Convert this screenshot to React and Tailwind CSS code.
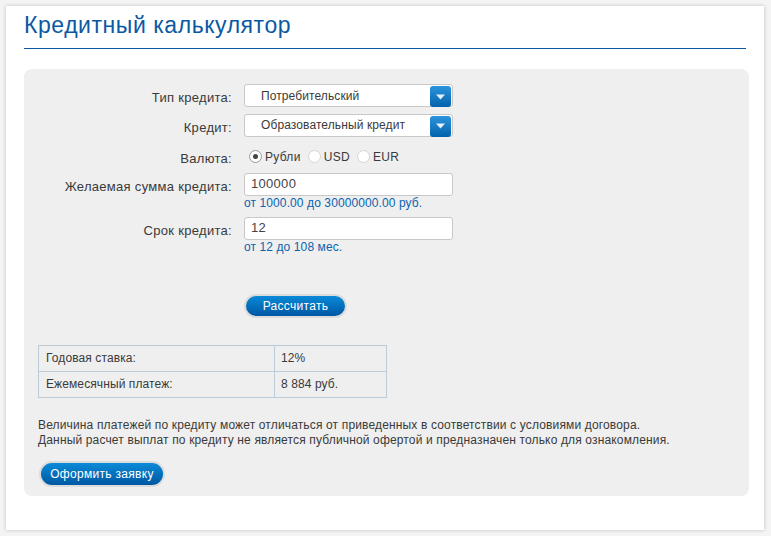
const font = { fontFamily: '"Liberation Sans", Arial, sans-serif' };

function SelectBox({ value }) {
  return (
    <div className="relative flex h-[23px] w-[209px] items-center rounded-[3px] border border-[#c8c8c8] bg-white pl-4 text-[12px] tracking-[0.1px] text-[#3a3a3a]">
      <span>{value}</span>
      <span className="absolute right-[1px] top-[1px] flex h-[21px] w-[21px] items-center justify-center rounded-[3px] bg-gradient-to-b from-[#2b95dd] to-[#0062ab]">
        <svg width="9" height="6" viewBox="0 0 9 6">
          <path d="M0 0.5 L9 0.5 L4.5 5.5 Z" fill="#e6f2fb" />
        </svg>
      </span>
    </div>
  );
}

function Radio({ checked, label }) {
  return (
    <label className="flex items-center gap-[3px] text-[12px] tracking-[0.3px] text-[#3a3a3a]">
      <span className={`flex h-[13px] w-[13px] items-center justify-center rounded-full border bg-white ${checked ? 'border-[#9a9a9a]' : 'border-[#d4d4d4]'}`}>
        {checked && <span className="h-[5px] w-[5px] rounded-full bg-[#444]" />}
      </span>
      {label}
    </label>
  );
}

function Row({ label, children, className = '' }) {
  return (
    <div className={`flex ${className}`}>
      <div className="w-[208px] shrink-0 pt-[4px] text-right text-[13px] tracking-[0.3px] text-[#3a3a3a]">
        {label}
      </div>
      <div className="ml-[12px]">{children}</div>
    </div>
  );
}

function BlueButton({ children, className = '' }) {
  return (
    <button className={`rounded-full border-[2px] border-[#dcdcdc] bg-gradient-to-b from-[#0b8ad8] to-[#0058a3] text-[12px] tracking-[0.3px] text-white ${className}`}>
      {children}
    </button>
  );
}

export default function App() {
  return (
    <div className="min-h-[536px] bg-[#f4f4f4] p-[6px]" style={font}>
      <div className="h-[524px] w-[758px] bg-white px-[18px] pt-[4px] shadow-[0_0_4px_rgba(0,0,0,0.22)]">
        <h1 className="border-b border-[#0b59a3] pb-[8px] text-[23px] leading-[30px] tracking-[0.55px] text-[#0b59a3]">
          Кредитный калькулятор
        </h1>

        <div className="mt-[20px] h-[427px] w-[725px] rounded-[8px] bg-[#efefef] pt-[15px]">
          <Row label="Тип кредита:">
            <SelectBox value="Потребительский" />
          </Row>
          <Row label="Кредит:" className="mt-[6px]">
            <SelectBox value="Образовательный кредит" />
          </Row>
          <Row label="Валюта:" className="mt-[8px]">
            <div className="flex h-[23px] items-center gap-[7px] pl-[5px]">
              <Radio checked label="Рубли" />
              <Radio label="USD" />
              <Radio label="EUR" />
            </div>
          </Row>
          <Row label="Желаемая сумма кредита:" className="mt-[4px]">
            <div className="flex h-[23px] w-[209px] items-center rounded-[3px] border border-[#c8c8c8] bg-white pl-[6px] text-[13px] tracking-[0.3px] text-[#444]">
              100000
            </div>
            <div className="text-[12px] leading-[14px] tracking-[0.1px] text-[#0a64b0]">
              от 1000.00 до 30000000.00 руб.
            </div>
          </Row>
          <Row label="Срок кредита:" className="mt-[7px]">
            <div className="flex h-[23px] w-[209px] items-center rounded-[3px] border border-[#c8c8c8] bg-white pl-[6px] text-[13px] tracking-[0.3px] text-[#444]">
              12
            </div>
            <div className="text-[12px] leading-[14px] tracking-[0.1px] text-[#0a64b0]">от 12 до 108 мес.</div>
          </Row>

          <div className="ml-[220px] mt-[39px]">
            <BlueButton className="h-[24px] w-[103px]">Рассчитать</BlueButton>
          </div>

          <table className="ml-[14px] mt-[27px] w-[349px] border-collapse text-[12px] tracking-[0.1px] text-[#3a3a3a]">
            <tbody>
              <tr className="h-[26px]">
                <td className="w-[236px] border border-[#bccbd8] pl-[7px]">Годовая ставка:</td>
                <td className="border border-[#bccbd8] pl-[6px]">12%</td>
              </tr>
              <tr className="h-[26px]">
                <td className="border border-[#bccbd8] pl-[7px]">Ежемесячный платеж:</td>
                <td className="border border-[#bccbd8] pl-[6px]">8 884 руб.</td>
              </tr>
            </tbody>
          </table>

          <p className="ml-[14px] mt-[20px] text-[12px] leading-[15px] tracking-[0.15px] text-[#3a3a3a]">
            Величина платежей по кредиту может отличаться от приведенных в соответствии с условиями договора.
            <br />
            Данный расчет выплат по кредиту не является публичной офертой и предназначен только для ознакомления.
          </p>

          <div className="ml-[15px] mt-[13px]">
            <BlueButton className="h-[26px] w-[126px]">Оформить заявку</BlueButton>
          </div>
        </div>
      </div>
    </div>
  );
}
